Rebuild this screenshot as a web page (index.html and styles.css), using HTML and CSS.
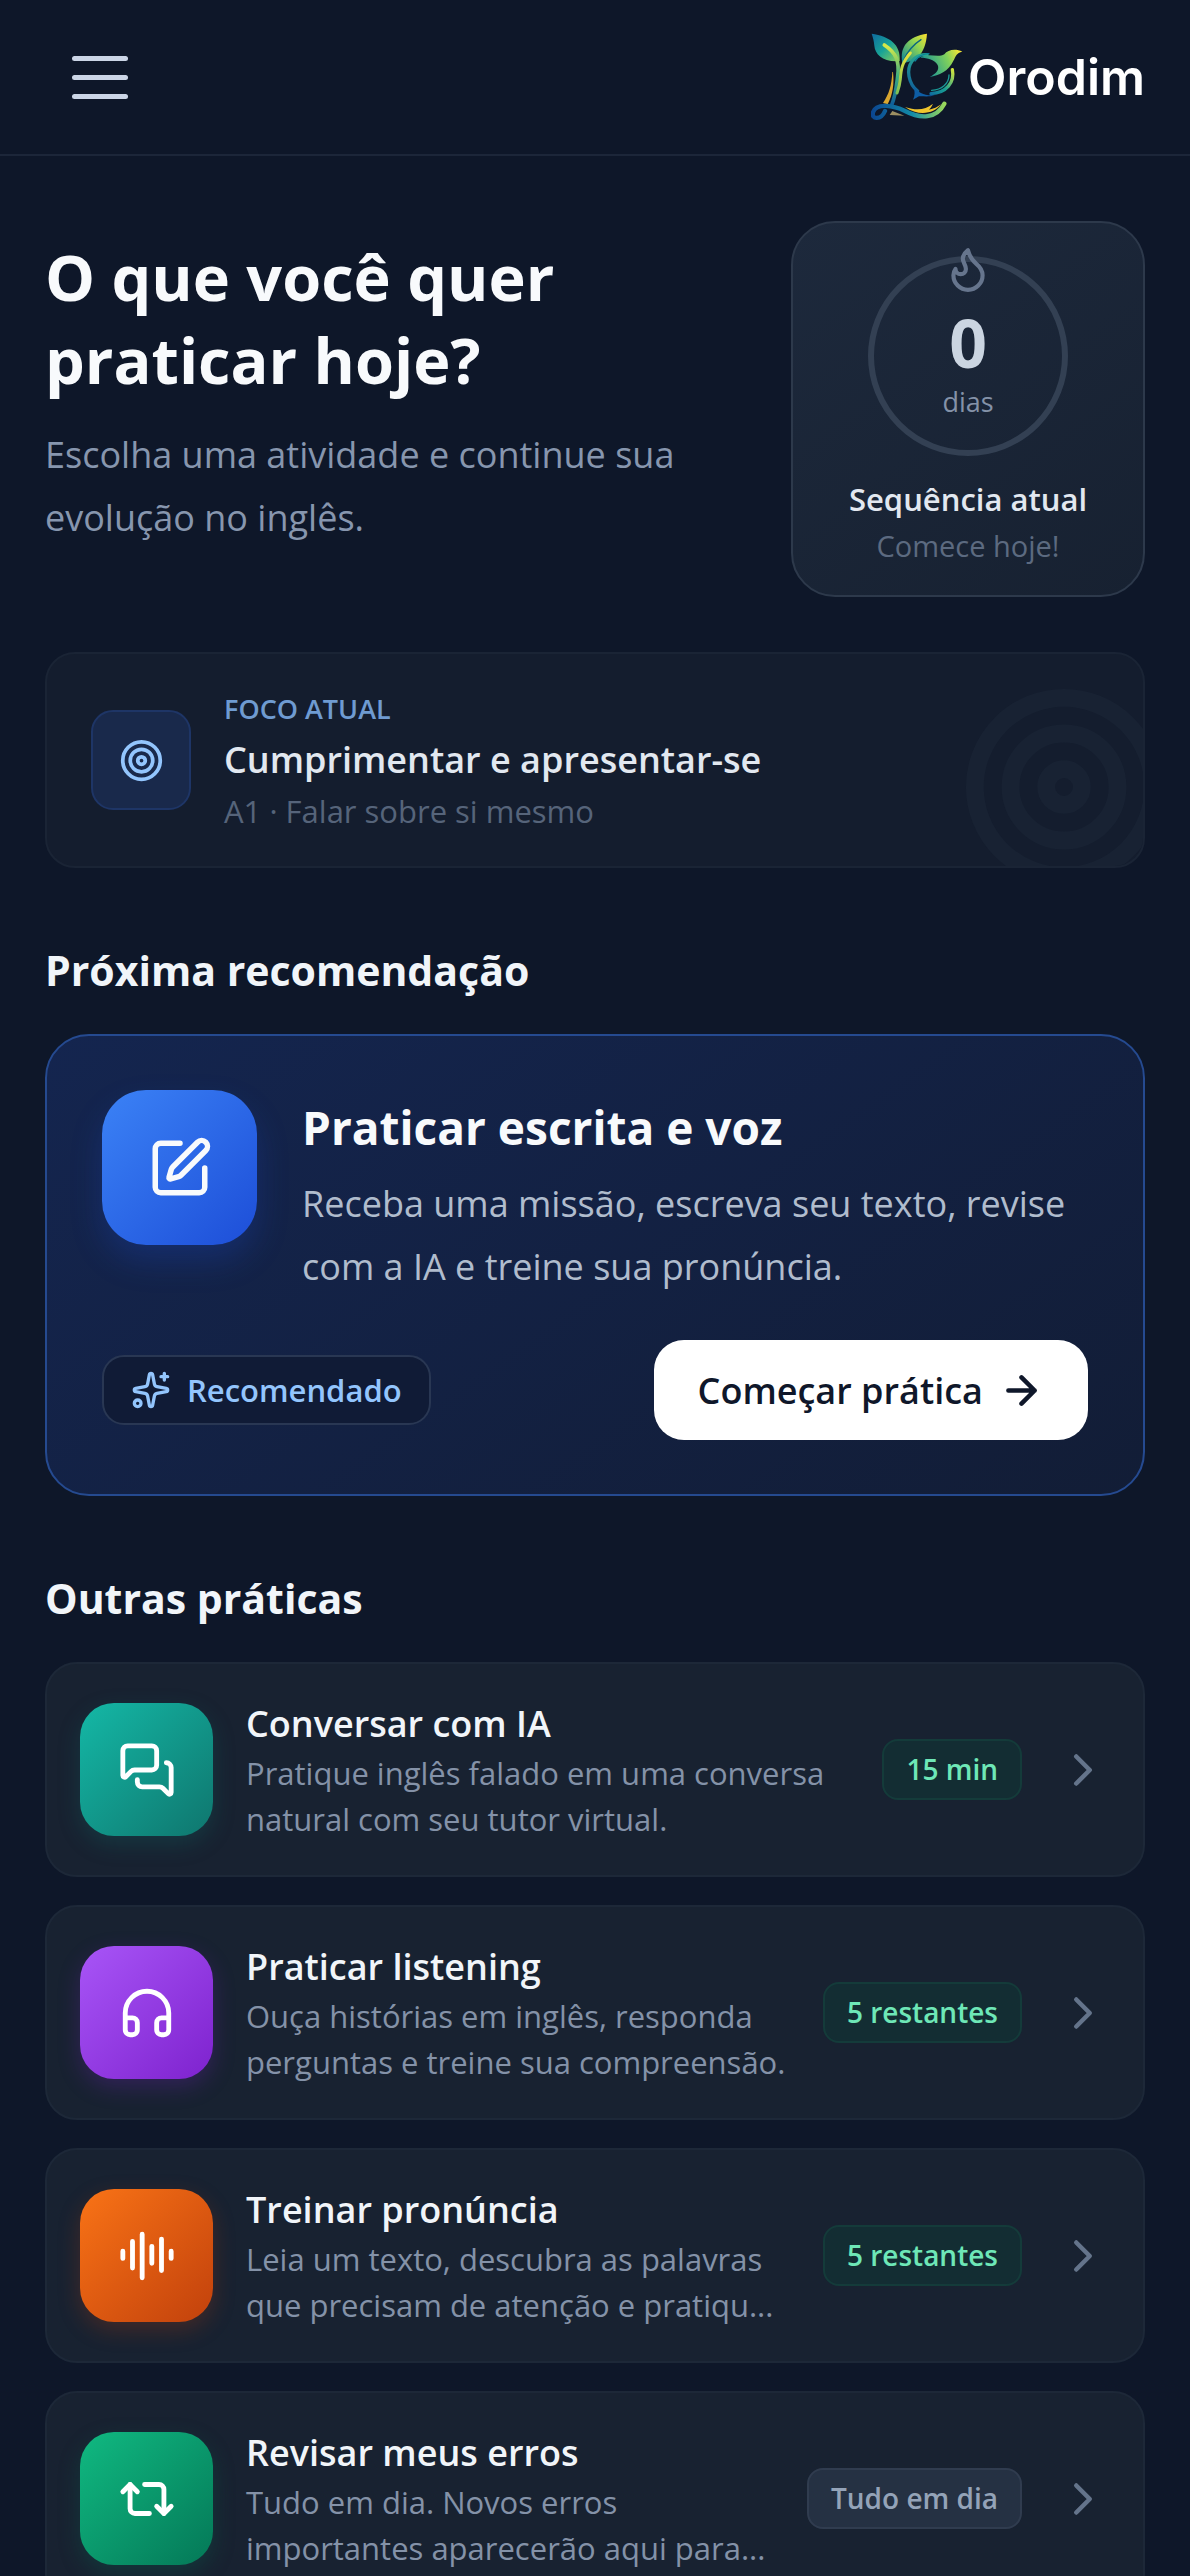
FILE: index.html
```html
<!DOCTYPE html>
<html lang="pt-BR">
<head>
<meta charset="utf-8">
<meta name="viewport" content="width=device-width, initial-scale=1">
<title>Orodim</title>
<link rel="stylesheet" href="styles.css">
</head>
<body>
<header class="topbar">
  <button class="menu-button" type="button" aria-label="Abrir menu"><span></span><span></span><span></span></button>
  <a class="brand" href="#">
    <svg class="brand-mark" viewBox="36 28 276 264" fill="none" stroke-linecap="round" aria-hidden="true">
      <defs>
        <linearGradient id="leafA" x1="0" y1="0" x2="1" y2="1"><stop offset="0" stop-color="#0f6aa0"/><stop offset=".5" stop-color="#17a297"/><stop offset="1" stop-color="#8fd255"/></linearGradient>
        <linearGradient id="leafB" x1="1" y1="0" x2="0" y2="1"><stop offset="0" stop-color="#ffe02e"/><stop offset=".4" stop-color="#8fd653"/><stop offset="1" stop-color="#0b8299"/></linearGradient>
        <linearGradient id="stemA" gradientUnits="userSpaceOnUse" x1="90" y1="70" x2="100" y2="250"><stop offset="0" stop-color="#d4e84a"/><stop offset=".5" stop-color="#3dae80"/><stop offset="1" stop-color="#0b559c"/></linearGradient>
        <linearGradient id="stemB" gradientUnits="userSpaceOnUse" x1="150" y1="90" x2="105" y2="240"><stop offset="0" stop-color="#e8e23c"/><stop offset="1" stop-color="#5fb85e"/></linearGradient>
        <linearGradient id="ring" gradientUnits="userSpaceOnUse" x1="220" y1="90" x2="160" y2="220"><stop offset="0" stop-color="#2bb58f"/><stop offset="1" stop-color="#0d559c"/></linearGradient>
        <linearGradient id="bird" gradientUnits="userSpaceOnUse" x1="300" y1="80" x2="190" y2="130"><stop offset="0" stop-color="#f4e536"/><stop offset=".35" stop-color="#7fd05c"/><stop offset="1" stop-color="#0f8f9c"/></linearGradient>
        <linearGradient id="arc" gradientUnits="userSpaceOnUse" x1="285" y1="140" x2="200" y2="215"><stop offset="0" stop-color="#d6e63c"/><stop offset=".5" stop-color="#18a092"/><stop offset="1" stop-color="#0d5fa2"/></linearGradient>
        <linearGradient id="wave" gradientUnits="userSpaceOnUse" x1="38" y1="0" x2="260" y2="0"><stop offset="0" stop-color="#0b4690"/><stop offset=".55" stop-color="#138ba8"/><stop offset="1" stop-color="#9edb58"/></linearGradient>
      </defs>
      <path d="M100 145C98 185 90 212 72 238L86 242C102 212 106 180 102 145Z" fill="#d9a62f"/>
      <path d="M38 30C92 38 126 62 122 112C72 116 48 92 46 66C45 52 42 42 38 30Z" fill="url(#leafA)"/>
      <path d="M204 30C150 38 120 66 130 118C180 112 200 82 204 30Z" fill="url(#leafB)"/>
      <path d="M134 110C146 82 164 62 186 48" stroke="#0b6580" stroke-width="4"/>
      <path d="M76 64C112 88 122 112 116 158C112 190 110 215 98 244" stroke="url(#stemA)" stroke-width="11"/>
      <path d="M154 88C128 118 126 138 124 166C122 186 118 196 114 208" stroke="url(#stemB)" stroke-width="9"/>
      <path d="M204 93C164 90 144 124 150 158C154 180 162 192 176 202" stroke="url(#ring)" stroke-width="10"/>
      <path d="M168 112C178 98 192 90 210 90" stroke="#0c7f9b" stroke-width="4"/>
      <path d="M184 102C206 86 236 104 256 92C266 78 290 74 310 84C292 88 290 98 284 110C268 144 240 156 212 160C232 150 242 138 236 124C228 108 206 102 184 102Z" fill="url(#bird)"/>
      <path d="M280 138C288 176 262 208 216 210" stroke="url(#arc)" stroke-width="10"/>
      <path d="M270 154C270 180 248 198 218 200" stroke="#1a9a97" stroke-width="4"/>
      <path d="M164 190C176 208 202 218 228 214C206 222 190 216 180 218L162 228C168 216 168 204 164 190Z" fill="#0e5ea6"/>
      <path d="M78 262C66 290 36 288 42 266C52 236 104 246 138 262C184 286 232 286 256 240" stroke="url(#wave)" stroke-width="13"/>
      <path d="M138 250C176 262 198 258 222 240C218 248 216 252 210 258C224 256 236 250 246 242C224 272 178 278 138 250Z" fill="#efc52d"/>
      <path d="M92 274L100 262L136 276Z" fill="#9c8f62"/>
    </svg>
    <span>Orodim</span>
  </a>
</header>

<main class="page">
  <section class="hero">
    <div class="hero-text">
      <h1>O que você quer praticar hoje?</h1>
      <p>Escolha uma atividade e continue sua evolução no inglês.</p>
    </div>
    <aside class="streak">
      <div class="streak-ring">
        <svg class="flame icon" viewBox="0 0 24 24" aria-hidden="true"><path d="M12 3q1 4 4 6.500t3 5.500a1 1 0 0 1-14 0 5 5 0 0 1 1-3 1 1 0 0 0 5 0c0-2-1.500-3-1.500-5q0-2 2.500-4"/></svg>
        <strong>0</strong>
        <span>dias</span>
      </div>
      <p class="streak-title">Sequência atual</p>
      <p class="streak-note">Comece hoje!</p>
    </aside>
  </section>

  <section class="focus">
    <div class="focus-icon"><svg class="icon" viewBox="0 0 24 24" aria-hidden="true"><circle cx="12" cy="12" r="10"/><circle cx="12" cy="12" r="6"/><circle cx="12" cy="12" r="2"/></svg></div>
    <div>
      <p class="focus-label">FOCO ATUAL</p>
      <p class="focus-title">Cumprimentar e apresentar-se</p>
      <p class="focus-note">A1 · Falar sobre si mesmo</p>
    </div>
    <svg class="focus-deco icon" viewBox="0 0 24 24" aria-hidden="true"><circle cx="12" cy="12" r="10"/><circle cx="12" cy="12" r="6"/><circle cx="12" cy="12" r="2"/></svg>
  </section>

  <h2>Próxima recomendação</h2>
  <section class="featured">
    <div class="featured-top">
      <div class="featured-icon"><svg class="icon" viewBox="0 0 24 24" aria-hidden="true"><path d="M12 3H5a2 2 0 0 0-2 2v14a2 2 0 0 0 2 2h14a2 2 0 0 0 2-2v-7"/><path d="M18.375 2.625a1 1 0 0 1 3 3l-9.013 9.014a2 2 0 0 1-.853.505l-2.873.84a.5.5 0 0 1-.62-.62l.84-2.873a2 2 0 0 1 .506-.852z"/></svg></div>
      <div class="featured-text">
        <h3>Praticar escrita e voz</h3>
        <p>Receba uma missão, escreva seu texto, revise com a IA e treine sua pronúncia.</p>
      </div>
    </div>
    <div class="featured-actions">
      <span class="tag"><svg class="icon" viewBox="0 0 24 24" aria-hidden="true"><path d="M11.017 2.814a1 1 0 0 1 1.966 0l1.051 5.558a2 2 0 0 0 1.594 1.594l5.558 1.051a1 1 0 0 1 0 1.966l-5.558 1.051a2 2 0 0 0-1.594 1.594l-1.051 5.558a1 1 0 0 1-1.966 0l-1.051-5.558a2 2 0 0 0-1.594-1.594l-5.558-1.051a1 1 0 0 1 0-1.966l5.558-1.051a2 2 0 0 0 1.594-1.594z"/><path d="M20 2v4M22 4h-4"/><circle cx="4" cy="20" r="2"/></svg>Recomendado</span>
      <button class="start" type="button">Começar prática<svg class="icon" viewBox="0 0 24 24" stroke-width="2.400" aria-hidden="true"><path d="M5 12h14M12 5l7 7-7 7"/></svg></button>
    </div>
  </section>

  <h2>Outras práticas</h2>
  <nav class="list" aria-label="Outras práticas">
    <a class="item" href="#">
      <span class="tile teal"><svg class="icon" viewBox="0 0 24 24" aria-hidden="true"><path d="M16 10a2 2 0 0 1-2 2H6.828a2 2 0 0 0-1.414.586l-2.202 2.202A.71.71 0 0 1 2 14.286V4a2 2 0 0 1 2-2h10a2 2 0 0 1 2 2z"/><path d="M20 9a2 2 0 0 1 2 2v10.286a.71.71 0 0 1-1.212.502l-2.202-2.202A2 2 0 0 0 17.172 19H10a2 2 0 0 1-2-2v-1"/></svg></span>
      <span class="item-text"><strong>Conversar com IA</strong><span class="desc">Pratique inglês falado em uma conversa natural com seu tutor virtual.</span></span>
      <span class="chip">15 min</span>
      <svg class="chevron icon" viewBox="0 0 24 24" aria-hidden="true"><path d="m9 18 6-6-6-6"/></svg>
    </a>
    <a class="item" href="#">
      <span class="tile purple"><svg class="icon" viewBox="0 0 24 24" aria-hidden="true"><path d="M3 14h3a2 2 0 0 1 2 2v3a2 2 0 0 1-2 2H5a2 2 0 0 1-2-2v-7a9 9 0 0 1 18 0v7a2 2 0 0 1-2 2h-1a2 2 0 0 1-2-2v-3a2 2 0 0 1 2-2h3"/></svg></span>
      <span class="item-text"><strong>Praticar listening</strong><span class="desc">Ouça histórias em inglês, responda perguntas e treine sua compreensão.</span></span>
      <span class="chip">5 restantes</span>
      <svg class="chevron icon" viewBox="0 0 24 24" aria-hidden="true"><path d="m9 18 6-6-6-6"/></svg>
    </a>
    <a class="item" href="#">
      <span class="tile orange"><svg class="icon" viewBox="0 0 24 24" aria-hidden="true"><path d="M2 10v3M6 6v11M10 3v18M14 8v7M18 5v13M22 10v3"/></svg></span>
      <span class="item-text"><strong>Treinar pronúncia</strong><span class="desc">Leia um texto, descubra as palavras que precisam de atenção e pratiqu...</span></span>
      <span class="chip">5 restantes</span>
      <svg class="chevron icon" viewBox="0 0 24 24" aria-hidden="true"><path d="m9 18 6-6-6-6"/></svg>
    </a>
    <a class="item" href="#">
      <span class="tile green"><svg class="icon" viewBox="0 0 24 24" aria-hidden="true"><path d="m2 9 3-3 3 3"/><path d="M13 18H7a2 2 0 0 1-2-2V6"/><path d="m22 15-3 3-3-3"/><path d="M11 6h6a2 2 0 0 1 2 2v10"/></svg></span>
      <span class="item-text"><strong>Revisar meus erros</strong><span class="desc">Tudo em dia. Novos erros importantes aparecerão aqui para...</span></span>
      <span class="chip muted">Tudo em dia</span>
      <svg class="chevron icon" viewBox="0 0 24 24" aria-hidden="true"><path d="m9 18 6-6-6-6"/></svg>
    </a>
  </nav>
</main>
</body>
</html>
```
FILE: styles.css
```css
* { box-sizing: border-box; }

html { overflow: hidden; }

body {
  margin: 0;
  height: 100vh;
  overflow: hidden;
  background: #0e1729;
  color: #f8fafc;
  font-family: "Open Sans", "Noto Sans", sans-serif;
}

h1, h2, h3, p { margin: 0; }

svg { stroke-width: 2; }

.icon {
  flex: none;
  fill: none;
  stroke: currentColor;
  stroke-linecap: round;
  stroke-linejoin: round;
}

.topbar {
  display: flex;
  align-items: center;
  justify-content: space-between;
  height: 156px;
  padding: 0 45px;
  border-bottom: 2px solid #1c2639;
}

.menu-button {
  display: flex;
  flex-direction: column;
  gap: 14px;
  padding: 27px;
  border: 0;
  background: none;
}

.menu-button span {
  width: 56px;
  height: 5px;
  border-radius: 3px;
  background: #cbd5e6;
}

.brand {
  display: flex;
  align-items: center;
  gap: 5px;
  color: #fff;
  font: 600 50px/60px Inter, sans-serif;
  text-decoration: none;
}

.brand-mark { width: 92px; height: 88px; }

.page { padding: 65px 45px 45px; }

.hero {
  display: flex;
  align-items: flex-start;
  justify-content: space-between;
  gap: 45px;
}

.hero-text { padding-top: 14px; }

h1 {
  max-width: 560px;
  font-size: 63px;
  line-height: 83px;
  font-weight: 700;
}

.hero-text p {
  margin-top: 22px;
  color: #8796ae;
  font-size: 36px;
  line-height: 63px;
}

.streak {
  display: flex;
  flex: none;
  flex-direction: column;
  align-items: center;
  width: 354px;
  padding: 33px 0 25px;
  border: 2px solid #2d394b;
  border-radius: 44px;
  background: linear-gradient(145deg, #1d293c, #172131);
}

.streak-ring {
  position: relative;
  display: flex;
  flex-direction: column;
  align-items: center;
  width: 200px;
  height: 200px;
  padding-top: 42px;
  border: 6px solid #334053;
  border-radius: 50%;
}

.flame {
  position: absolute;
  top: -18px;
  width: 50px;
  height: 50px;
  color: #66758d;
}

.streak-ring strong {
  color: #cbd5e1;
  font-size: 66px;
  line-height: 76px;
}

.streak-ring span {
  color: #8492a8;
  font-size: 27px;
  line-height: 44px;
}

.streak-title {
  margin-top: 20px;
  color: #e2e8f0;
  font-size: 31px;
  line-height: 46px;
  font-weight: 600;
}

.streak-note {
  color: #5c6a80;
  font-size: 29px;
  line-height: 48px;
}

.focus {
  position: relative;
  display: flex;
  align-items: center;
  gap: 33px;
  margin-top: 55px;
  padding: 30px 44px;
  overflow: hidden;
  border: 2px solid #1a2435;
  border-radius: 30px;
  background: #141d2e;
}

.focus-icon {
  display: grid;
  place-items: center;
  width: 100px;
  height: 100px;
  border: 2px solid #1e3566;
  border-radius: 22px;
  background: #19294b;
  color: #93c5fd;
}

.focus-icon svg { width: 45px; height: 45px; }

.focus-label {
  color: #6f9bd1;
  font-size: 27px;
  line-height: 50px;
  font-weight: 600;
}

.focus-title {
  color: #e2e8f0;
  font-size: 36px;
  line-height: 52px;
  font-weight: 600;
}

.focus-note {
  color: #56647a;
  font-size: 31px;
  line-height: 50px;
}

.focus-deco {
  position: absolute;
  right: -28px;
  bottom: -28px;
  width: 214px;
  height: 214px;
  color: #182233;
}

h2 {
  margin-top: 72px;
  color: #f1f5f9;
  font-size: 41px;
  line-height: 60px;
  font-weight: 700;
}

.featured {
  margin-top: 34px;
  padding: 54px 55px;
  border: 2px solid #254a90;
  border-radius: 44px;
  background: linear-gradient(145deg, #14254f, #121d36);
}

.featured-top {
  display: flex;
  gap: 45px;
}

.featured-icon {
  display: grid;
  flex: none;
  place-items: center;
  width: 155px;
  height: 155px;
  border-radius: 44px;
  background: linear-gradient(135deg, #3b82f6, #1d4ed8);
  box-shadow: 0 16px 32px #1d4ed83d;
}

.featured-icon svg { width: 66px; height: 66px; }

h3 {
  margin-top: 5px;
  font-size: 46px;
  line-height: 64px;
  font-weight: 700;
}

.featured-text p {
  margin-top: 13px;
  color: #b0bccd;
  font-size: 36px;
  line-height: 63px;
}

.featured-actions {
  display: flex;
  align-items: center;
  justify-content: space-between;
  margin-top: 42px;
}

.tag {
  display: flex;
  align-items: center;
  gap: 16px;
  padding: 11px 27px;
  border: 2px solid #293753;
  border-radius: 22px;
  background: #101b36;
  color: #93c5fd;
  font-size: 31px;
  line-height: 44px;
  font-weight: 600;
}

.tag svg { width: 40px; height: 40px; }

.start {
  display: flex;
  align-items: center;
  gap: 16px;
  height: 100px;
  padding: 0 44px;
  border: 0;
  border-radius: 30px;
  background: #fff;
  color: #0f172a;
  font-family: inherit;
  font-size: 36px;
  font-weight: 600;
}

.start svg { width: 45px; height: 45px; stroke-width: 2.4; }

.list {
  display: grid;
  gap: 28px;
  margin-top: 34px;
}

.item {
  display: flex;
  align-items: center;
  height: 215px;
  padding: 0 33px;
  border: 2px solid #1d2838;
  border-radius: 32px;
  background: #182231;
  color: #f1f5f9;
  text-decoration: none;
}

.tile {
  display: grid;
  flex: none;
  place-items: center;
  width: 133px;
  height: 133px;
  margin-right: 33px;
  border-radius: 34px;
  color: #fff;
}

.tile svg { width: 58px; height: 58px; }
.teal { background: linear-gradient(135deg, #14b8a6, #0f766e); box-shadow: 0 8px 22px #0f766e40; }
.purple { background: linear-gradient(135deg, #a855f7, #7e22ce); box-shadow: 0 8px 22px #7e22ce40; }
.orange { background: linear-gradient(135deg, #f97316, #c2410c); box-shadow: 0 8px 22px #c2410c40; }
.green { background: linear-gradient(135deg, #10b981, #047857); box-shadow: 0 8px 22px #04785740; }

.item-text { flex: 1; min-width: 0; }

.item-text strong {
  display: block;
  font-size: 36px;
  line-height: 52px;
  font-weight: 600;
}

.desc {
  display: block;
  color: #8492a8;
  font-size: 31px;
  line-height: 46px;
}

.chip {
  flex: none;
  margin-left: 28px;
  padding: 8px 22px;
  border: 2px solid #143b3a;
  border-radius: 16px;
  background: #132d33;
  color: #6ee7b7;
  font-size: 28px;
  line-height: 41px;
  font-weight: 600;
}

.chip.muted {
  border-color: #303c4f;
  background: #253143;
  color: #94a3b8;
}

.chevron {
  width: 54px;
  height: 54px;
  margin-left: 34px;
  color: #64748b;
}
```
